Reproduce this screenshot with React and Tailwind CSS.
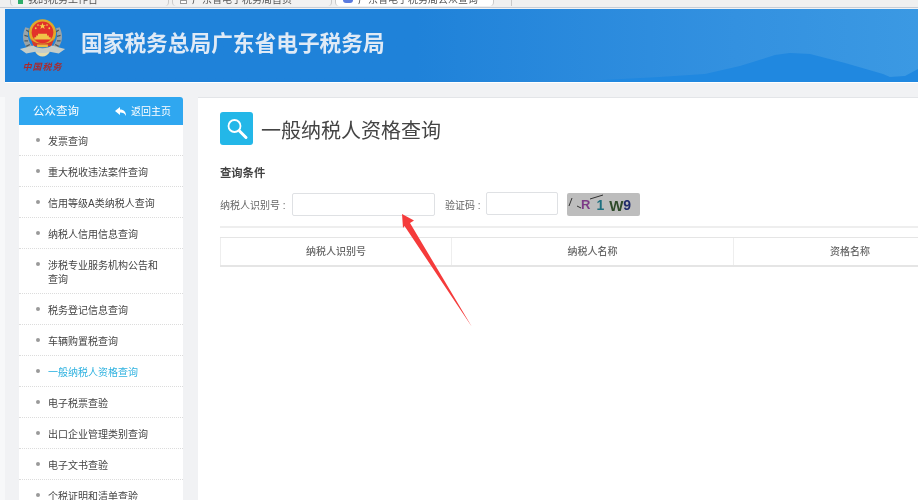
import React from "react";

const menu = [
  "发票查询",
  "重大税收违法案件查询",
  "信用等级A类纳税人查询",
  "纳税人信用信息查询",
  "涉税专业服务机构公告和查询",
  "税务登记信息查询",
  "车辆购置税查询",
  "一般纳税人资格查询",
  "电子税票查验",
  "出口企业管理类别查询",
  "电子文书查验",
  "个税证明和清单查验",
];

function Emblem() {
  return (
    <svg width="47" height="44" viewBox="0 0 52 48" className="block">
      <path d="M7 10C2 20 4 32 15 37L19 34C11 30 8 20 11 11Z" fill="#9aa4a8" />
      <path d="M45 10C50 20 48 32 37 37L33 34C41 30 44 20 41 11Z" fill="#9aa4a8" />
      <path d="M8 13l3 2M6 19l4 1M6 25l4 0M8 31l4-2M44 13l-3 2M46 19l-4 1M46 25l-4 0M44 31l-4-2" stroke="#4e5a5c" strokeWidth="1.4" />
      <circle cx="26" cy="16" r="15" fill="#e0a92a" />
      <circle cx="26" cy="15.5" r="12" fill="#e2322a" />
      <path d="M26 5l1 2.6h2.7l-2.2 1.6.9 2.6-2.4-1.6-2.4 1.6.9-2.6-2.2-1.6H25Z" fill="#f4cf4a" />
      <circle cx="18.5" cy="11" r="1" fill="#f4cf4a" />
      <circle cx="33.5" cy="11" r="1" fill="#f4cf4a" />
      <circle cx="21" cy="7.5" r="0.9" fill="#f4cf4a" />
      <circle cx="31" cy="7.5" r="0.9" fill="#f4cf4a" />
      <path d="M19 19h14v2H19ZM21 17h10v2H21ZM17 21h18v2.5H17Z" fill="#f0c548" />
      <path d="M13 22C16 30 36 30 39 22L36 31H16Z" fill="#d43a2c" />
      <path d="M20 29h12v3H20Z" fill="#e9bb3f" />
      <path d="M1 34L16 30C19 34 33 34 36 30L51 34L44 39L34 37C32 41 20 41 18 37L8 39Z" fill="#c5cdc8" />
      <path d="M18 37C21 44 31 44 34 37C31 39 21 39 18 37Z" fill="#e4dcae" />
    </svg>
  );
}

function Tab({ w, active, icon, text }) {
  return (
    <div className={`flex h-[6px] items-start gap-[5px] overflow-hidden rounded-b-sm border-x border-[#c9c9c9] pl-[7px] ${w} ${active ? "bg-white" : "bg-[#f2f2f2]"}`}>
      {icon}
      <span className="-mt-[5px] whitespace-nowrap text-[10px] leading-[10px] text-[#555] blur-[0.6px]">{text}</span>
    </div>
  );
}

export default function App() {
  return (
    <div className="relative h-[500px] w-[918px] overflow-hidden bg-[#f1f2f4] font-['Liberation_Sans','Noto_Sans_CJK_SC',sans-serif] blur-[0.3px]">
      <div className="mb-px flex h-[8px] items-start gap-[3px] border-b border-[#c5ccd6] bg-[#f0f0f0] pl-[10px]">
        <Tab w="w-[159px]" text="我的税务工作台" icon={<span className="h-[4px] w-[5px] bg-[#2fae6a]" />} />
        <Tab w="w-[160px]" text="广东省电子税务局首页" icon={<span className="h-[4px] w-[7px] border border-[#999] bg-white" />} />
        <Tab w="w-[159px]" active text="广东省电子税务局公众查询" icon={<span className="h-[3px] w-[10px] rounded-b-sm bg-[#5b7be0]" />} />
        <div className="-ml-[3px] h-[6px] w-[18px] border-r border-[#c9c9c9]" />
      </div>

      <div className="ml-[5px] h-[74px] bg-white pb-px">
        <header className="relative flex h-[73px] items-center overflow-hidden bg-gradient-to-r from-[#1f82d9] from-45% via-[#3391e0] via-80% to-[#3b99e3] pl-[14px]">
          <svg className="absolute inset-0" width="913" height="73" viewBox="0 0 913 73">
            <path d="M560 73L655 68L700 65L735 57L770 46L785 44L805 45L840 54L878 65L885 68L900 67L913 60V73Z" fill="#2088e0" />
          </svg>
          <div className="relative mb-[1px] flex w-[47px] flex-col items-center">
            <Emblem />
            <span className="whitespace-nowrap text-[9px] font-bold italic leading-[11px] tracking-[1px] text-[#a82a2e]">中国税务</span>
          </div>
          <h1 className="relative mb-[3px] ml-[15px] whitespace-nowrap text-[21.7px] font-bold leading-none text-[#dfeaf6]">国家税务总局广东省电子税务局</h1>
        </header>
      </div>

      <div className="mt-[14px] border-l-[5px] border-[#f7f8f9]">
        <div className="flex items-start gap-[15px] pl-[14px]">
          <aside className="w-[164px] shrink-0">
            <div className="flex h-[28px] items-center justify-between rounded-t-[3px] bg-[#2fa7f0] pl-[14px] pr-[12px] text-white">
              <span className="mt-[2px] text-[11.5px]">公众查询</span>
              <span className="flex items-center gap-[5px] text-[10px]">
                <svg width="11" height="9" viewBox="0 0 11 9"><path d="M0 4L5 0V2.5C9 2.5 11 5 11 9C10 6.5 8 5.5 5 5.5V8Z" fill="#fff" /></svg>
                返回主页
              </span>
            </div>
            <ul className="bg-white">
              {menu.map((m) => (
                <li key={m} className="flex items-start gap-[8px] border-b border-dotted border-[#dcdcdc] pb-[6px] pl-[17px] pr-[19px] pt-[10px] last:border-b-0">
                  <span className="mt-[3px] h-[4px] w-[4px] shrink-0 rounded-full bg-[#9a9a9a]" />
                  <span className={`text-[10px] leading-[14px] ${m === "一般纳税人资格查询" ? "text-[#2fb2e0]" : "text-[#444]"}`}>{m}</span>
                </li>
              ))}
            </ul>
          </aside>

          <main className="h-[403px] min-w-0 flex-1 overflow-hidden border-t border-[#e3e5e8] bg-white pl-[22px] pt-[14px]">
            <div className="flex items-start gap-[8px]">
              <div className="flex h-[33px] w-[33px] items-center justify-center rounded-[3px] bg-[#23b7e8]">
                <svg width="33" height="33" viewBox="0 0 33 33" fill="none" stroke="#fff">
                  <circle cx="14.5" cy="14" r="6" strokeWidth="1.8" />
                  <path d="M19.5 19L26 25.5" strokeWidth="3" strokeLinecap="round" />
                </svg>
              </div>
              <h2 className="mt-[3px] text-[20px] font-normal leading-[33px] text-[#444]">一般纳税人资格查询</h2>
            </div>

            <h3 className="mt-[17px] text-[11.3px] font-bold leading-[16px] text-[#444]">查询条件</h3>

            <div className="mt-[11px] flex h-[24px] items-start">
              <label className="mt-[7px] w-[72px] whitespace-nowrap text-[10px] leading-[14px] text-[#666]">纳税人识别号 :</label>
              <div className="mt-px h-[23px] w-[143px] rounded-[2px] border border-[#dfe1e4] bg-white" />
              <label className="mt-[7px] ml-[10px] w-[41px] whitespace-nowrap text-[10px] leading-[14px] text-[#666]">验证码 :</label>
              <div className="h-[23px] w-[72px] rounded-[2px] border border-[#dfe1e4] bg-white" />
              <div className="relative ml-[9px] mt-px flex h-[23px] w-[73px] items-center rounded-[2px] bg-[#bdbdbd] pl-[14px] pt-[1px] font-bold">
                <span className="text-[13px] text-[#7d3a86]">R</span>
                <span className="ml-[6px] text-[14px] text-[#1f6f7f]">1</span>
                <span className="ml-[5px] text-[15px] leading-none text-[#2f4a2a]">W</span>
                <span className="text-[14px] leading-none text-[#1f2a6a]">9</span>
                <svg className="absolute inset-0" width="73" height="23" viewBox="0 0 73 23" fill="none" stroke="#333">
                  <path d="M2 13L5 5M10 13L14 15M23 6L36 2" />
                </svg>
              </div>
            </div>

            <div className="mt-[10px] border-t-2 border-[#eeeeee]" />

            <div className="mt-[9px] flex h-[30px] w-[780px] border-y border-b-2 border-[#e5e5e5] text-[10px] font-medium text-[#666]">
              <div className="flex w-[232px] items-center justify-center border-x border-[#eeeeee]">纳税人识别号</div>
              <div className="flex w-[282px] items-center justify-center border-r border-[#eeeeee]">纳税人名称</div>
              <div className="flex w-[232px] items-center justify-center">资格名称</div>
            </div>
          </main>
        </div>
      </div>

      <svg className="pointer-events-none absolute left-0 top-0" width="918" height="500" viewBox="0 0 918 500">
        <path d="M402 214L414 220.5L410 223L472 327L404.500 226L403 228Z" fill="#f53b3b" />
      </svg>
    </div>
  );
}
